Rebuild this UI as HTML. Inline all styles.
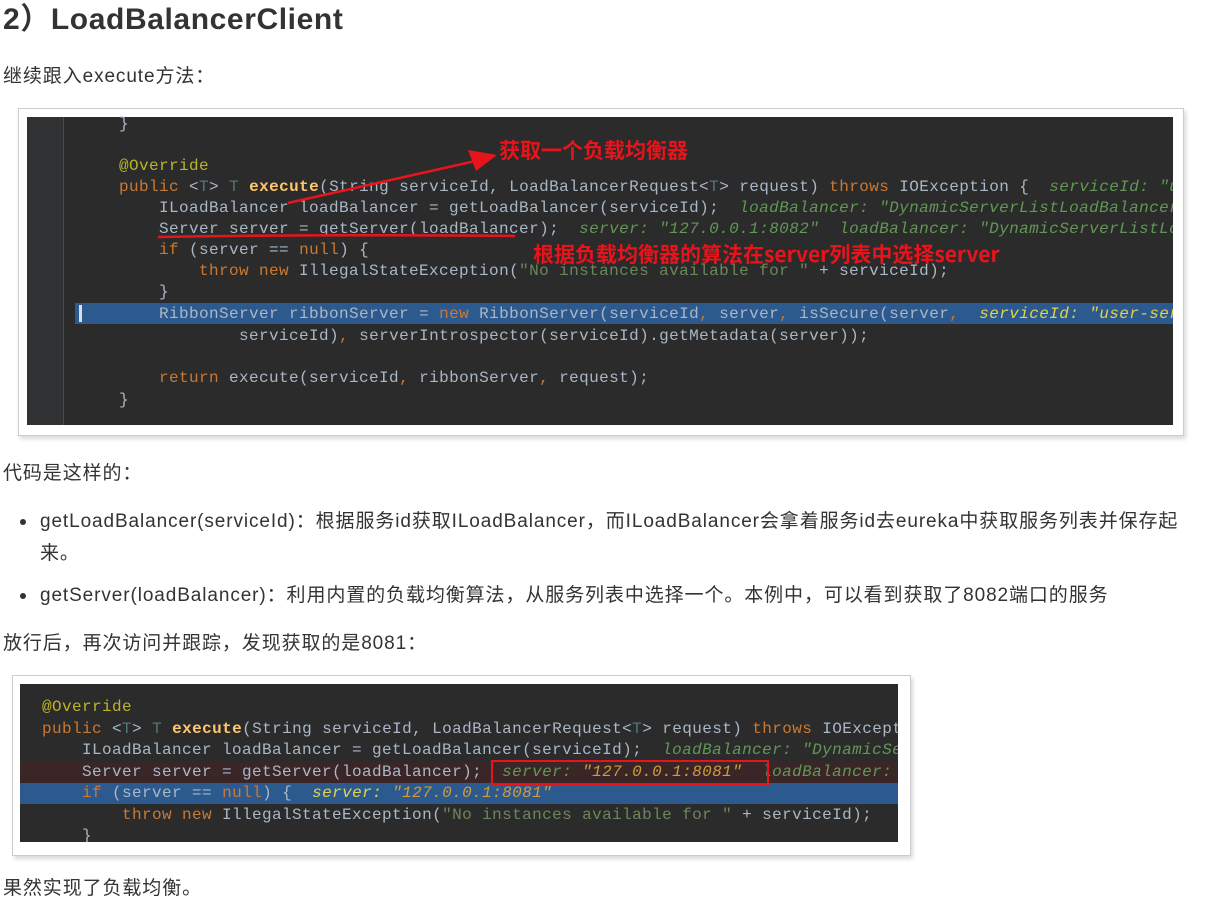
<!DOCTYPE html>
<html><head><meta charset="utf-8"><style>
*{margin:0;padding:0;box-sizing:border-box}
body{width:1209px;height:906px;background:#fff;position:relative;overflow:hidden;font-family:"Liberation Sans","Noto Sans CJK SC",sans-serif;color:#333}
.t{position:absolute;font-size:19px;letter-spacing:0.9px;white-space:nowrap;line-height:24px}
.box{position:absolute;background:#fff;border:1px solid #ccc;box-shadow:2px 3px 4px rgba(0,0,0,.15)}
.code{position:absolute;background:#2b2b2b;overflow:hidden}
.ln{position:absolute;white-space:pre;font-family:"Liberation Mono",monospace;font-size:16px;letter-spacing:0.4px;line-height:21px;color:#a9b7c6}
.k{color:#cc7832}.a{color:#bbb529}.s{color:#6a8759}.m{color:#ffc66d}.h{color:#629755;font-style:italic}.hy{color:#e0d34a;font-style:italic}.ho{color:#d39a3a;font-style:italic}.tp{color:#507874}
.red{position:absolute;color:#e8141b;font-weight:bold;font-size:21px;line-height:26px;white-space:nowrap;font-family:"Noto Sans CJK SC","Liberation Sans",sans-serif}
.dot{position:absolute;width:6px;height:6px;border-radius:50%;background:#333}
</style></head><body>
<div class="t" style="left:3px;top:3px;font-size:30px;letter-spacing:0.6px;font-weight:bold;line-height:34px">2）LoadBalancerClient</div>
<div class="t" style="left:3px;top:65px">继续跟入execute方法：</div>

<div class="box" style="left:18px;top:108px;width:1166px;height:328px"></div>
<div class="code" style="left:27px;top:117px;width:1146px;height:308px">
 <div style="position:absolute;left:0;top:0;width:37px;height:308px;background:#303234"></div>
 <div style="position:absolute;left:36px;top:0;width:1px;height:308px;background:#4a4a4a"></div>
 <div style="position:absolute;left:48px;top:186px;width:1098px;height:21px;background:#2d5a8e"></div>
 <div style="position:absolute;left:52px;top:188px;width:3px;height:17px;background:#ddd"></div>
</div>
<div class="ln" style="left:119px;top:114px">}</div>
<div class="ln" style="left:119px;top:156px"><span class="a">@Override</span></div>
<div class="ln" style="left:119px;top:177px"><span class="k">public</span> &lt;<span class="tp">T</span>&gt; <span class="tp">T</span> <span class="m"><b>execute</b></span>(String serviceId, LoadBalancerRequest&lt;<span class="tp">T</span>&gt; request) <span class="k">throws</span> IOException {  <span class="h">serviceId: "u</span></div>
<div class="ln" style="left:119px;top:198px">    ILoadBalancer loadBalancer = getLoadBalancer(serviceId);  <span class="h">loadBalancer: "DynamicServerListLoadBalancer</span></div>
<div class="ln" style="left:119px;top:219px">    Server server = getServer(loadBalancer);  <span class="h">server: "127.0.0.1:8082"  loadBalancer: "DynamicServerListLo</span></div>
<div class="ln" style="left:119px;top:240px">    <span class="k">if</span> (server == <span class="k">null</span>) {</div>
<div class="ln" style="left:119px;top:261px">        <span class="k">throw new</span> IllegalStateException(<span class="s">"No instances available for "</span> + serviceId);</div>
<div class="ln" style="left:119px;top:282px">    }</div>
<div class="ln" style="left:119px;top:304px">    RibbonServer ribbonServer = <span class="k">new</span> RibbonServer(serviceId<span class="k">,</span> server<span class="k">,</span> isSecure(server<span class="k">,</span>  <span class="hy">serviceId: "user-ser</span></div>
<div class="ln" style="left:119px;top:326px">            serviceId)<span class="k">,</span> serverIntrospector(serviceId).getMetadata(server));</div>
<div class="ln" style="left:119px;top:368px">    <span class="k">return</span> execute(serviceId<span class="k">,</span> ribbonServer<span class="k">,</span> request);</div>
<div class="ln" style="left:119px;top:390px">}</div>
<div style="position:absolute;left:1173px;top:117px;width:10px;height:308px;background:#fff"></div>
<svg style="position:absolute;left:0;top:0" width="1209" height="450">
 <line x1="288" y1="203" x2="480" y2="160" stroke="#e8141b" stroke-width="2.5"/>
 <polygon points="497,155 468,150 476,171" fill="#e8141b"/>
 <path d="M158 237 Q330 234 515 236" stroke="#e8141b" stroke-width="2.5" fill="none"/>
</svg>
<div class="red" style="left:499px;top:137px">获取一个负载均衡器</div>
<div class="red" style="left:533px;top:241px">根据负载均衡器的算法在server列表中选择server</div>

<div class="t" style="left:3px;top:462px">代码是这样的：</div>
<div class="dot" style="left:20px;top:519px"></div>
<div class="t" style="left:40px;top:510px">getLoadBalancer(serviceId)：根据服务id获取ILoadBalancer，而ILoadBalancer会拿着服务id去eureka中获取服务列表并保存起</div>
<div class="t" style="left:40px;top:542px">来。</div>
<div class="dot" style="left:20px;top:593px"></div>
<div class="t" style="left:40px;top:584px">getServer(loadBalancer)：利用内置的负载均衡算法，从服务列表中选择一个。本例中，可以看到获取了8082端口的服务</div>
<div class="t" style="left:3px;top:632px">放行后，再次访问并跟踪，发现获取的是8081：</div>

<div class="box" style="left:12px;top:675px;width:899px;height:181px"></div>
<div class="code" style="left:20px;top:684px;width:878px;height:158px">
 <div style="position:absolute;left:0;top:78px;width:878px;height:21px;background:#3a2627"></div>
 <div style="position:absolute;left:0;top:99px;width:878px;height:21px;background:#2d5a8e"></div>
</div>
<div style="position:absolute;left:20px;top:684px;width:878px;height:158px;overflow:hidden">
<div class="ln" style="left:22px;top:13px"><span class="a">@Override</span></div>
<div class="ln" style="left:22px;top:35px"><span class="k">public</span> &lt;<span class="tp">T</span>&gt; <span class="tp">T</span> <span class="m"><b>execute</b></span>(String serviceId, LoadBalancerRequest&lt;<span class="tp">T</span>&gt; request) <span class="k">throws</span> IOException {</div>
<div class="ln" style="left:22px;top:56px">    ILoadBalancer loadBalancer = getLoadBalancer(serviceId);  <span class="h">loadBalancer: "DynamicServer</span></div>
<div class="ln" style="left:22px;top:78px">    Server server = getServer(loadBalancer);  <span class="h">server: </span><span class="ho">"127.0.0.1:8081"</span>  <span class="h">loadBalancer: "D</span></div>
<div class="ln" style="left:22px;top:99px">    <span class="k">if</span> (server == <span class="k">null</span>) {  <span class="hy">server: </span><span class="ho">"127.0.0.1:8081"</span></div>
<div class="ln" style="left:22px;top:121px">        <span class="k">throw new</span> IllegalStateException(<span class="s">"No instances available for "</span> + serviceId);</div>
<div class="ln" style="left:22px;top:142px">    }</div>
</div>
<div style="position:absolute;left:491px;top:760px;width:278px;height:26px;border:2px solid #e8141b"></div>

<div class="t" style="left:3px;top:877px">果然实现了负载均衡。</div>
</body></html>
